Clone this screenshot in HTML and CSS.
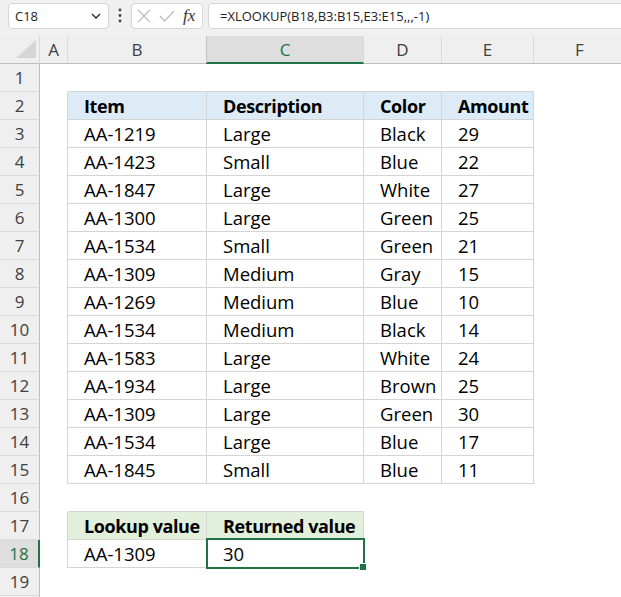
FILE: index.html
```html
<!DOCTYPE html>
<html>
<head>
<meta charset="utf-8">
<title>XLOOKUP</title>
<link rel="stylesheet" href="styles.css">
</head>
<body>
<div class="toolbar">
  <div class="namebox">
    <span>C18</span>
    <svg class="chev" width="10" height="6" viewBox="0 0 10 6"><path d="M1 1L5 5L9 1" fill="none" stroke="#333" stroke-width="1.5"/></svg>
  </div>
  <svg class="dots" width="22" height="26" viewBox="0 0 22 26"><circle cx="11" cy="7" r="1.4" fill="#444"/><circle cx="11" cy="12.5" r="1.4" fill="#444"/><circle cx="11" cy="18" r="1.4" fill="#444"/></svg>
  <div class="fxbox">
    <svg class="icon-x" width="14" height="14" viewBox="0 0 14 14"><path d="M1 1L13 13M13 1L1 13" fill="none" stroke="#bcbcbc" stroke-width="1.2"/></svg>
    <svg class="icon-check" width="16" height="12" viewBox="0 0 16 12"><path d="M1 6L5.5 11L15 1" fill="none" stroke="#bcbcbc" stroke-width="1.2"/></svg>
    <span class="fx">fx</span>
  </div>
  <div class="formula">=XLOOKUP(B18,B3:B15,E3:E15,,,-1)</div>
</div>

<div class="sheet">
  <div class="row">
    <div class="corner"><svg width="40" height="27" viewBox="0 0 40 27"><path d="M16 22L36 22L36 4Z" fill="#d6d6d6"/></svg></div>
    <div class="ch">A</div><div class="ch">B</div><div class="ch sel">C</div><div class="ch">D</div><div class="ch">E</div><div class="ch">F</div>
  </div>
  <div class="row">
    <div class="rh">1</div><div class="c"></div><div class="c bt"></div><div class="c bt"></div><div class="c bt"></div><div class="c bt"></div><div class="c"></div>
  </div>
  <div class="row">
    <div class="rh">2</div><div class="c br"></div><div class="c t hb">Item</div><div class="c t hb">Description</div><div class="c t hb">Color</div><div class="c t hb">Amount</div><div class="c"></div>
  </div>
  <div class="row">
    <div class="rh">3</div><div class="c br"></div><div class="c t">AA-1219</div><div class="c t">Large</div><div class="c t">Black</div><div class="c t">29</div><div class="c"></div>
  </div>
  <div class="row">
    <div class="rh">4</div><div class="c br"></div><div class="c t">AA-1423</div><div class="c t">Small</div><div class="c t">Blue</div><div class="c t">22</div><div class="c"></div>
  </div>
  <div class="row">
    <div class="rh">5</div><div class="c br"></div><div class="c t">AA-1847</div><div class="c t">Large</div><div class="c t">White</div><div class="c t">27</div><div class="c"></div>
  </div>
  <div class="row">
    <div class="rh">6</div><div class="c br"></div><div class="c t">AA-1300</div><div class="c t">Large</div><div class="c t">Green</div><div class="c t">25</div><div class="c"></div>
  </div>
  <div class="row">
    <div class="rh">7</div><div class="c br"></div><div class="c t">AA-1534</div><div class="c t">Small</div><div class="c t">Green</div><div class="c t">21</div><div class="c"></div>
  </div>
  <div class="row">
    <div class="rh">8</div><div class="c br"></div><div class="c t">AA-1309</div><div class="c t">Medium</div><div class="c t">Gray</div><div class="c t">15</div><div class="c"></div>
  </div>
  <div class="row">
    <div class="rh">9</div><div class="c br"></div><div class="c t">AA-1269</div><div class="c t">Medium</div><div class="c t">Blue</div><div class="c t">10</div><div class="c"></div>
  </div>
  <div class="row">
    <div class="rh">10</div><div class="c br"></div><div class="c t">AA-1534</div><div class="c t">Medium</div><div class="c t">Black</div><div class="c t">14</div><div class="c"></div>
  </div>
  <div class="row">
    <div class="rh">11</div><div class="c br"></div><div class="c t">AA-1583</div><div class="c t">Large</div><div class="c t">White</div><div class="c t">24</div><div class="c"></div>
  </div>
  <div class="row">
    <div class="rh">12</div><div class="c br"></div><div class="c t">AA-1934</div><div class="c t">Large</div><div class="c t">Brown</div><div class="c t">25</div><div class="c"></div>
  </div>
  <div class="row">
    <div class="rh">13</div><div class="c br"></div><div class="c t">AA-1309</div><div class="c t">Large</div><div class="c t">Green</div><div class="c t">30</div><div class="c"></div>
  </div>
  <div class="row">
    <div class="rh">14</div><div class="c br"></div><div class="c t">AA-1534</div><div class="c t">Large</div><div class="c t">Blue</div><div class="c t">17</div><div class="c"></div>
  </div>
  <div class="row">
    <div class="rh">15</div><div class="c br"></div><div class="c t">AA-1845</div><div class="c t">Small</div><div class="c t">Blue</div><div class="c t">11</div><div class="c"></div>
  </div>
  <div class="row">
    <div class="rh">16</div><div class="c"></div><div class="c bt"></div><div class="c bt"></div><div class="c"></div><div class="c"></div><div class="c"></div>
  </div>
  <div class="row">
    <div class="rh">17</div><div class="c br"></div><div class="c t hg">Lookup value</div><div class="c t hg">Returned value</div><div class="c"></div><div class="c"></div><div class="c"></div>
  </div>
  <div class="row">
    <div class="rh sel">18</div><div class="c br"></div><div class="c t">AA-1309</div><div class="c t">30</div><div class="c"></div><div class="c"></div><div class="c"></div>
  </div>
  <div class="row">
    <div class="rh">19</div><div class="c"></div><div class="c"></div><div class="c"></div><div class="c"></div><div class="c"></div><div class="c"></div>
  </div>
  <div class="row">
    <div class="rh"></div><div class="c"></div><div class="c"></div><div class="c"></div><div class="c"></div><div class="c"></div><div class="c"></div>
  </div>

  <div class="selection"></div>
  <div class="handle"></div>
</div>
</body>
</html>
```

FILE: styles.css
```css
html, body {
  margin: 0;
  padding: 0;
}

body {
  width: 621px;
  height: 597px;
  overflow: hidden;
  background: #ffffff;
  font-family: "Open Sans", "Noto Sans", sans-serif;
  color: #000;
}

/* ---------- formula bar ---------- */
.toolbar {
  display: flex;
  align-items: flex-start;
  height: 36px;
  box-sizing: border-box;
  padding: 3px 0 0 8px;
  background: #f0f0f0;
}

.namebox {
  width: 101px;
  height: 26px;
  box-sizing: border-box;
  border: 1px solid #d6d6d6;
  border-radius: 4px;
  background: #fff;
  display: flex;
  align-items: center;
  justify-content: space-between;
  padding: 0 7px 0 6px;
  font-size: 13px;
  color: #222;
}

.chev {
  display: block;
}

.dots {
  display: block;
  flex: none;
}

.fxbox {
  width: 72px;
  height: 26px;
  box-sizing: border-box;
  border: 1px solid #d6d6d6;
  border-radius: 4px;
  background: #fff;
  display: flex;
  align-items: center;
  padding-left: 5px;
  flex: none;
}

.icon-x {
  display: block;
  margin-right: 8px;
}

.icon-check {
  display: block;
  margin-right: 8px;
}

.fx {
  font-family: "Liberation Serif", "DejaVu Serif", serif;
  font-style: italic;
  font-size: 17px;
  color: #333;
  line-height: 24px;
}

.formula {
  flex: 1;
  margin-left: 5px;
  margin-right: -10px;
  height: 26px;
  box-sizing: border-box;
  border: 1px solid #d6d6d6;
  border-radius: 4px;
  background: #fff;
  padding-left: 11px;
  font-size: 13px;
  line-height: 24px;
  color: #222;
  white-space: nowrap;
}

/* ---------- sheet grid ---------- */
.sheet {
  position: relative;
  display: grid;
  grid-template-columns: 40px 28px 139px 157px 78px 92px 92px;
  grid-auto-rows: 28px;
}

.row {
  display: contents;
}

.row > div {
  box-sizing: border-box;
}

.corner {
  background: #efefef;
  border-bottom: 1px solid #bdbdbd;
  border-right: 1px solid #d9d9d9;
  overflow: hidden;
}

.corner svg {
  display: block;
}

.ch {
  background: #efefef;
  border-right: 1px solid #d9d9d9;
  border-bottom: 1px solid #bdbdbd;
  display: flex;
  align-items: center;
  justify-content: center;
  font-size: 17px;
  color: #404040;
}

.ch.sel {
  background: #dedede;
  color: #217346;
  border-bottom: 2px solid #217346;
  border-left: 1px solid #c4c4c4;
  margin-left: -1px;
}

.rh {
  background: #efefef;
  border-right: 1px solid #bdbdbd;
  border-bottom: 1px solid #dadada;
  display: flex;
  align-items: center;
  justify-content: center;
  font-size: 17px;
  color: #404040;
}

.rh.sel {
  background: #dedede;
  color: #217346;
  border-right: 2px solid #217346;
}

.c {
  padding: 1px 0 0 16px;
  line-height: 26px;
  font-size: 18.5px;
  white-space: nowrap;
  overflow: visible;
}

/* borders of the data tables */
.bt {
  border-bottom: 1px solid #d4d4d4;
}

.br {
  border-right: 1px solid #d4d4d4;
}

.t {
  border-right: 1px solid #d4d4d4;
  border-bottom: 1px solid #d4d4d4;
}

.hb {
  background: #ddebf7;
  font-weight: 700;
  font-size: 18px;
  letter-spacing: -0.4px;
}

.hg {
  background: #e2efda;
  font-weight: 700;
  font-size: 18px;
  letter-spacing: -0.4px;
}

/* ---------- active cell ---------- */
.selection {
  position: absolute;
  left: 206px;
  top: 502px;
  width: 159px;
  height: 31px;
  box-sizing: border-box;
  border: 2px solid #217346;
  pointer-events: none;
}

.handle {
  position: absolute;
  left: 359px;
  top: 527px;
  width: 8px;
  height: 8px;
  box-sizing: border-box;
  background: #217346;
  border: 1px solid #ffffff;
}
```
